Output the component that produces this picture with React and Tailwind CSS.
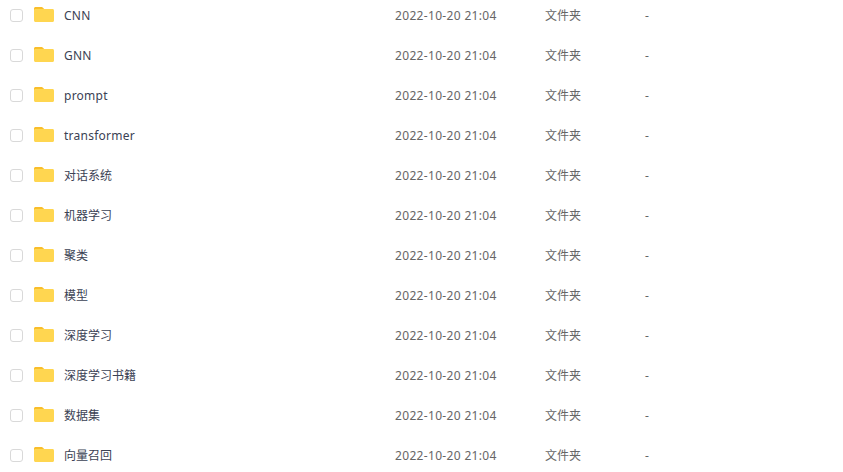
const rows = [["CNN",1],["GNN",1],["prompt",1],["transformer",1],["对话系统"],["机器学习"],["聚类"],["模型"],["深度学习"],["深度学习书籍"],["数据集"],["向量召回"]];

function Folder() {
  return (
    <svg width="20" height="15" viewBox="0 0 20 15" className="shrink-0">
      <path d="M1.5 0H7C8.1 0 8.7 .5 9.5 1.3L10.5 2.4H11.5V3H0V1.5C0 .7 .7 0 1.5 0Z" fill="#F9BE2B" />
      <path d="M0 3.4C0 2.6 .7 2 1.5 2H18.5C19.4 2 20 2.6 20 3.5V13.5C20 14.4 19.4 15 18.5 15H1.5C.7 15 0 14.4 0 13.5Z" fill="#FFD650" />
    </svg>
  );
}

export default function App() {
  return (
    <div className="w-[843px] h-[472px] overflow-hidden bg-white font-['Noto_Sans','Noto_Sans_CJK_SC',sans-serif]">
      <div className="-mt-[5px]">
        {rows.map(([name, latin]) => (
          <div key={name} className="flex items-center h-10 text-xs">
            <span className="ml-[10px] w-[13px] h-[13px] shrink-0 rounded-[3px] border border-[#d9d9d9] bg-white" />
            <span className="ml-[11px] -mt-[1px] flex"><Folder /></span>
            <span className={latin ? "ml-[10px] pt-[2px] w-[331px] shrink-0 text-[#3b4254] tracking-[0.25px]" : "ml-[10px] pt-[2px] w-[331px] shrink-0 text-[#3b4254]"}>{name}</span>
            <span className="pt-[2px] w-[150px] shrink-0 text-[#666] tracking-[0.33px]">2022-10-20 21:04</span>
            <span className="pt-[2px] w-[100px] shrink-0 text-[#666]">文件夹</span>
            <span className="pt-[2px] text-[#666]">-</span>
          </div>
        ))}
      </div>
    </div>
  );
}
